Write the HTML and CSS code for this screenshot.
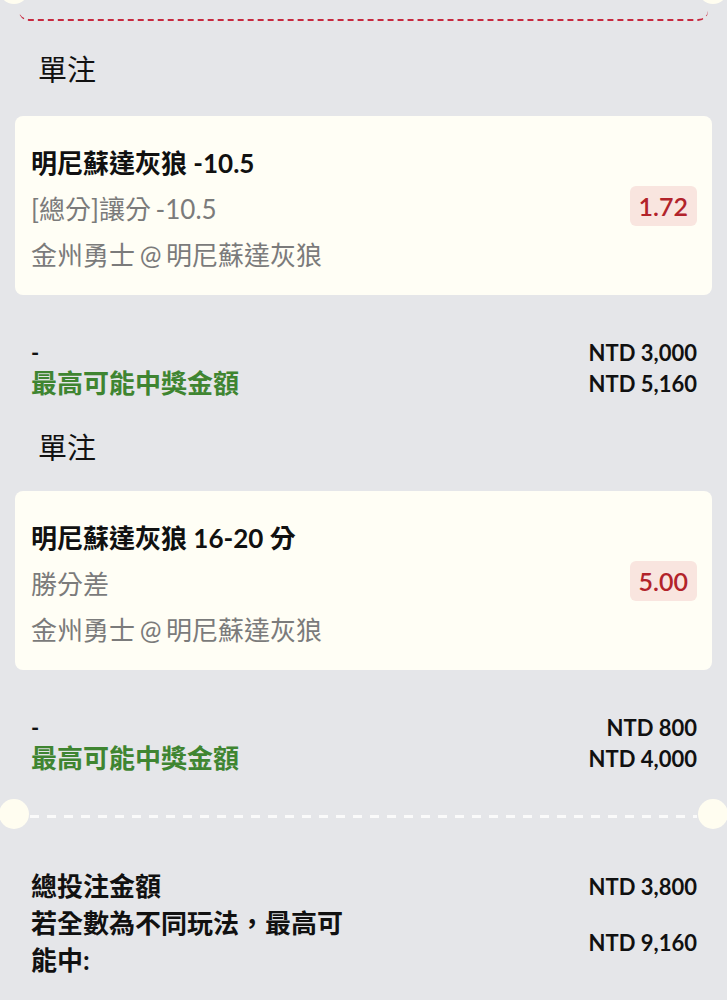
FILE: index.html
```html
<!DOCTYPE html>
<html lang="zh-Hant">
<head>
<meta charset="utf-8">
<link rel="stylesheet" href="styles.css">
</head>
<body>
<div class="page">
  <div class="top">
    <span class="cut cut-l"></span>
    <div class="redline"></div>
    <span class="cut cut-r"></span>
  </div>

  <section class="bet">
    <div class="bet-type">單注</div>
    <div class="card">
      <div class="info">
        <div class="title">明尼蘇達灰狼 -10.5</div>
        <div class="sub">[總分]讓分 -10.5</div>
        <div class="sub">金州勇士 @ 明尼蘇達灰狼</div>
      </div>
      <div class="odds">1.72</div>
    </div>
    <div class="summary">
      <div class="row"><span class="dash">-</span><span class="amt">NTD 3,000</span></div>
      <div class="row"><span class="win">最高可能中獎金額</span><span class="amt">NTD 5,160</span></div>
    </div>
  </section>

  <section class="bet">
    <div class="bet-type">單注</div>
    <div class="card">
      <div class="info">
        <div class="title">明尼蘇達灰狼 16-20 分</div>
        <div class="sub">勝分差</div>
        <div class="sub">金州勇士 @ 明尼蘇達灰狼</div>
      </div>
      <div class="odds">5.00</div>
    </div>
    <div class="summary">
      <div class="row"><span class="dash">-</span><span class="amt">NTD 800</span></div>
      <div class="row"><span class="win">最高可能中獎金額</span><span class="amt">NTD 4,000</span></div>
    </div>
  </section>

  <div class="sep">
    <span class="circle"></span>
    <div class="whiteline"></div>
    <span class="circle"></span>
  </div>

  <div class="totals">
    <div class="trow"><span class="tlabel">總投注金額</span><span class="amt">NTD 3,800</span></div>
    <div class="trow"><span class="tlabel">若全數為不同玩法，最高可能中:</span><span class="amt">NTD 9,160</span></div>
  </div>
</div>
</body>
</html>
```

FILE: styles.css
```css
* { box-sizing: border-box; }
html, body { margin: 0; padding: 0; }
body {
  background: #e5e6e9;
  font-family: Lato, "Noto Sans CJK TC", sans-serif;
  color: #111;
  width: 727px;
  overflow: hidden;
}
.page { position: relative; overflow: hidden; }

.top {
  position: relative;
  height: 21px;
  padding: 0 19px;
}
.redline {
  height: 21px;
  border-bottom: 2px dashed #c8283f;
  border-radius: 0 0 10px 10px;
}
.cut {
  position: absolute;
  top: -26px;
  width: 30px;
  height: 30px;
  border-radius: 50%;
  background: #fffdf0;
}
.cut-l { left: -1px; }
.cut-r { right: -1px; }

.bet-type {
  font-size: 29px;
  line-height: 40px;
  padding: 29px 0 0 38px;
  margin-bottom: 26px;
  font-weight: 400;
}
.bet + .bet .bet-type { padding-top: 29px; margin-bottom: 23px; }
.card {
  margin: 0 15px;
  background: #fffef5;
  border-radius: 8px;
  padding: 24px 15px 17px 16px;
  display: flex;
  align-items: center;
  justify-content: space-between;
}
.info { display: flex; flex-direction: column; }
.title {
  font-size: 26px;
  line-height: 46px;
  font-weight: 700;
}
.sub {
  font-size: 26px;
  line-height: 46px;
  color: #7b7b7b;
  word-spacing: -2px;
}
.odds {
  background: #f9e5df;
  color: #b2232a;
  font-size: 25px;
  line-height: 40px;
  padding: 0 9px;
  border-radius: 6px;
  font-weight: 600;
  margin-top: -6px;
}

.summary {
  padding: 42px 30px 0 31px;
}
.row {
  display: flex;
  justify-content: space-between;
  align-items: center;
  line-height: 31px;
  height: 31px;
}
.dash { font-size: 22px; font-weight: 700; }
.win {
  font-size: 26px;
  font-weight: 700;
  color: #3f8531;
}
.amt {
  font-size: 22px;
  font-weight: 700;
  color: #111;
}

.sep {
  display: flex;
  align-items: center;
  margin: 25px -1px 39px -1px;
  height: 30px;
}
.circle {
  width: 30px;
  height: 30px;
  border-radius: 50%;
  background: #fffdf0;
  flex: none;
}
.whiteline {
  flex: 1;
  height: 3px;
  margin: 4px 1px 0 1px;
  background-image: linear-gradient(to right, #fafafa 0 9px, transparent 9px 100%);
  background-size: 17px 3px;
  background-repeat: repeat-x;
}

.totals {
  padding: 0 30px 0 31px;
}
.trow {
  display: flex;
  justify-content: space-between;
  align-items: center;
}
.tlabel {
  font-size: 26px;
  line-height: 37px;
  font-weight: 700;
  width: 325px;
}
```
